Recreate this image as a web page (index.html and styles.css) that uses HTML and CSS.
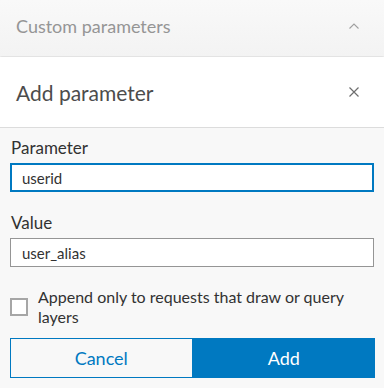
FILE: index.html
```html
<!DOCTYPE html>
<html lang="en">
<head>
  <meta charset="UTF-8">
  <meta name="viewport" content="width=device-width, initial-scale=1.0">
  <title>Add parameter</title>
  <link rel="stylesheet" href="styles.css">
</head>
<body>
  <div class="section-header">
    <span class="section-title">Custom parameters</span>
    <svg class="chevron" width="10" height="6" viewBox="0 0 10 6"><path d="M0.5 5.5 L5 1 L9.5 5.5" fill="none" stroke="#a0a0a0" stroke-width="1.1"/></svg>
  </div>

  <div class="dialog-header">
    <span class="dialog-title">Add parameter</span>
    <svg class="close" width="10" height="10" viewBox="0 0 10 10"><path d="M0.5 0.5 L9.5 9.5 M9.5 0.5 L0.5 9.5" fill="none" stroke="#6e6e6e" stroke-width="1.2"/></svg>
  </div>

  <div class="form">
    <div class="form-group">
      <label for="param">Parameter</label>
      <input type="text" id="param" class="input active" value="userid">
    </div>
    <div class="form-group">
      <label for="value">Value</label>
      <input type="text" id="value" class="input" value="user_alias">
    </div>
    <label class="check-row">
      <span class="checkbox"></span>
      <span class="check-text">Append only to requests that draw or query layers</span>
    </label>
    <div class="buttons">
      <button class="btn btn-cancel">Cancel</button>
      <button class="btn btn-add">Add</button>
    </div>
  </div>
</body>
</html>
```

FILE: styles.css
```css
body {
  margin: 0;
  background: #f8f8f8;
  font-family: Lato, "Noto Sans", sans-serif;
  color: #323232;
}
.section-header {
  height: 56px;
  display: flex;
  align-items: center;
  justify-content: space-between;
  padding: 0 25px 4px 16px;
  box-sizing: border-box;
  background: linear-gradient(#f9f9f9, #f3f3f3);
  box-shadow: 0 1px 2px rgba(0, 0, 0, 0.12);
}
.section-title {
  font-size: 18px;
  color: #959595;
}
.dialog-header {
  margin-top: 1px;
  height: 70px;
  display: flex;
  align-items: center;
  justify-content: space-between;
  padding: 0 25px 0 16px;
  background: #fff;
  border-bottom: 1px solid #dcdcdc;
}
.dialog-title {
  font-size: 21px;
  color: #4c4c4c;
}
.form {
  padding: 10px 10px 0 10px;
}
.form-group {
  margin-bottom: 21px;
}
.form-group label {
  display: block;
  font-size: 17px;
  margin: 0 0 5px 1px;
  line-height: 20px;
}
.input {
  display: block;
  width: 100%;
  box-sizing: border-box;
  height: 29px;
  border: 1px solid #959595;
  padding: 0 11px;
  font-family: inherit;
  font-size: 15px;
  color: #323232;
  background: #fff;
  outline: none;
}
.input.active {
  border: 2px solid #0079c1;
  padding: 0 10px;
}
.check-row {
  display: flex;
  align-items: center;
  gap: 10px;
  margin-top: -1px;
}
.checkbox {
  flex: none;
  width: 14px;
  height: 14px;
  border: 2px solid #a6a6a6;
  background: #fff;
}
.check-text {
  font-size: 16px;
  line-height: 20px;
}
.buttons {
  display: flex;
  margin-top: 11px;
  margin-right: -1px;
}
.btn {
  flex: 1;
  height: 40px;
  font-family: inherit;
  font-size: 18px;
  border: 1px solid #0079c1;
  cursor: pointer;
}
.btn-cancel {
  background: #f8f8f8;
  color: #0079c1;
}
.btn-add {
  background: #0079c1;
  color: #fff;
}
```
